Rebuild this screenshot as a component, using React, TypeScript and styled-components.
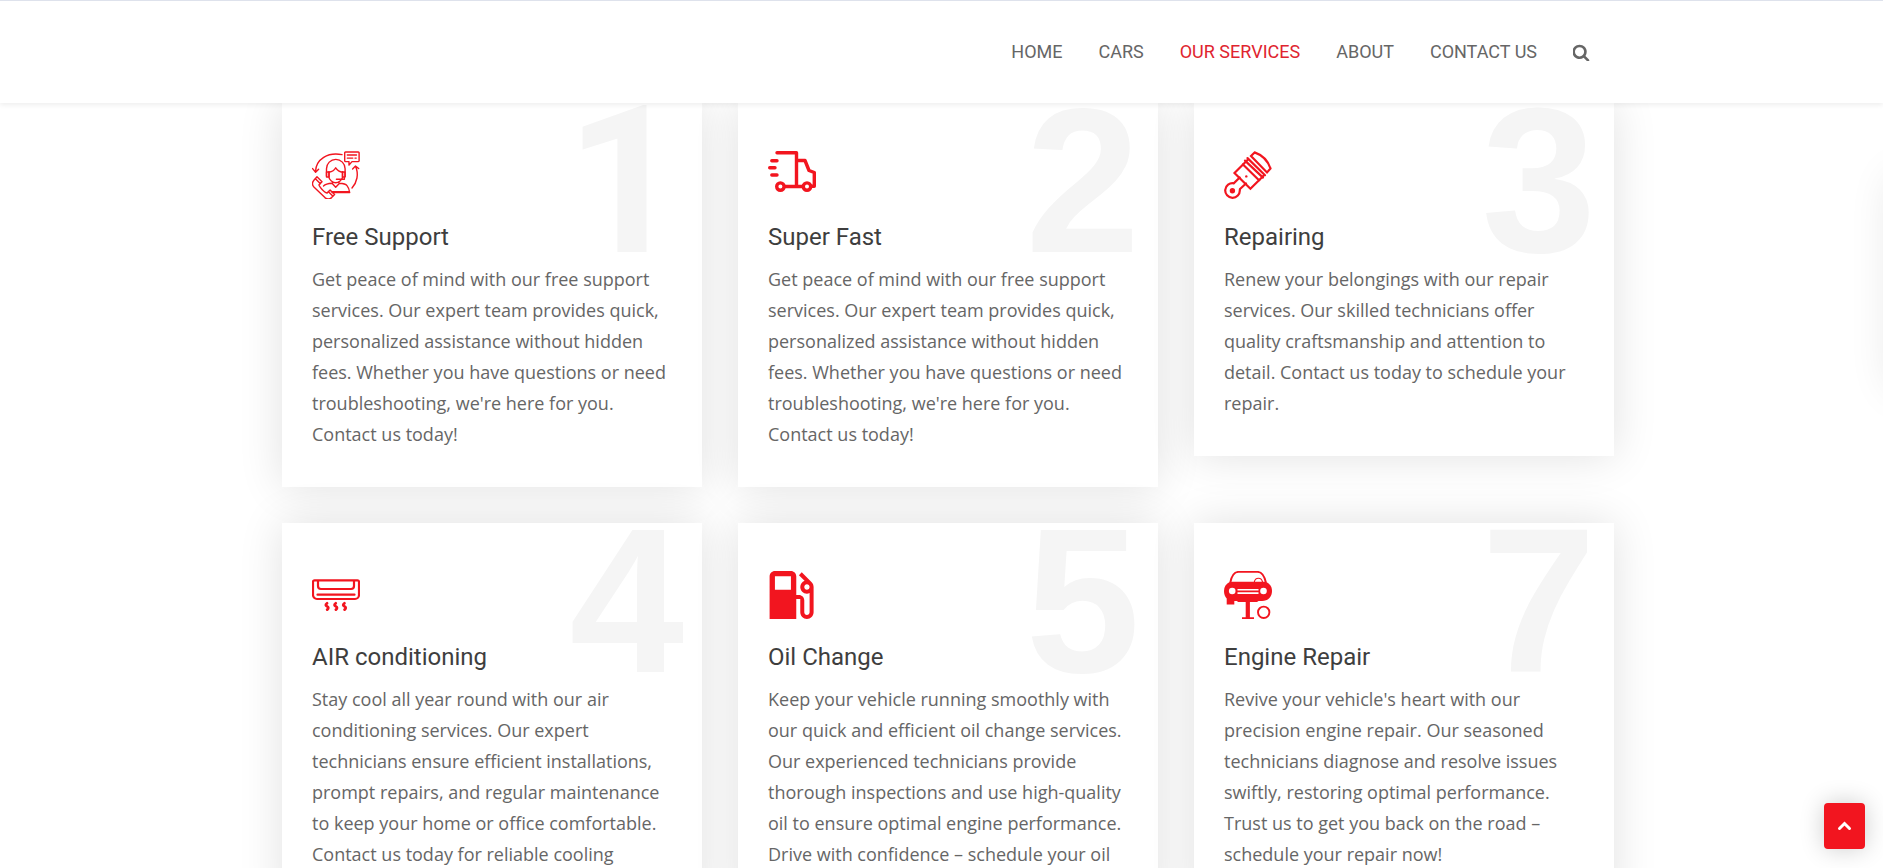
import React from "react";
import styled, { createGlobalStyle } from "styled-components";

const RED = "#f2151f";

const GlobalStyle = createGlobalStyle`
  *, *::before, *::after { box-sizing: border-box; }
  body {
    margin: 0;
    background: #fff;
    color: #666;
    font-family: "Open Sans", sans-serif;
    font-size: 18px;
    line-height: 31px;
  }
`;

const Page = styled.div`
  position: relative;
  height: 100vh;
  overflow: hidden;
`;

const Header = styled.header`
  position: relative;
  z-index: 10;
  height: 103px;
  background: #fff;
  border-top: 1px solid #dee2ec;
  box-shadow: 0 2px 5px rgba(0, 0, 0, 0.07);
`;

const Container = styled.div`
  width: 100%;
  max-width: 1369px;
  margin: 0 auto;
  padding: 0 12px 0 25px;
`;

const NavBar = styled(Container)`
  height: 100%;
  display: flex;
  align-items: center;
  justify-content: flex-end;
`;

const Nav = styled.nav`
  display: flex;
  align-items: center;
  gap: 36px;
  margin-right: 24px;
`;

const NavLink = styled.a<{ $active?: boolean }>`
  font-family: Roboto, sans-serif;
  font-size: 18px;
  line-height: 24px;
  text-decoration: none;
  text-transform: uppercase;
  color: ${(p) => (p.$active ? "#e0242f" : "#666")};
`;

const SearchButton = styled.button`
  display: flex;
  padding: 0;
  border: 0;
  background: none;
  color: #666;
  cursor: pointer;
`;

const Grid = styled.section`
  display: grid;
  grid-template-columns: repeat(3, 1fr);
  gap: 36px;
  align-items: start;
`;

const Card = styled.article`
  position: relative;
  padding: 48px 30px 37px;
  background: #fff;
  box-shadow: 0 0 42px rgba(0, 0, 0, 0.12);
`;

const CardNumber = styled.span<{ $plain?: boolean }>`
  position: absolute;
  top: 0;
  right: 18px;
  font-family: ${(p) => (p.$plain ? "Roboto" : '"Liberation Sans"')}, sans-serif;
  font-size: 206px;
  font-weight: 700;
  line-height: ${(p) => (p.$plain ? 158 : 156)}px;
  color: #f5f5f5;
`;

const CardIcon = styled.svg`
  position: relative;
  display: block;
  width: 48px;
  height: 48px;
  color: ${RED};
`;

const CardTitle = styled.h2`
  position: relative;
  margin: 23px 0 11px;
  font-family: Roboto, sans-serif;
  font-size: 24px;
  font-weight: 400;
  line-height: 31px;
  color: #3e3e3e;
`;

const CardText = styled.p`
  position: relative;
  margin: 0;
`;

const SidePanel = styled.aside`
  position: absolute;
  top: 178px;
  left: calc(100% + 11px);
  width: 240px;
  height: 210px;
  background: #fff;
  box-shadow: 0 0 42px rgba(0, 0, 0, 0.12);
`;

const BackToTop = styled.button`
  position: fixed;
  right: 18px;
  bottom: 19px;
  z-index: 20;
  display: flex;
  align-items: center;
  justify-content: center;
  width: 41px;
  height: 46px;
  padding: 0;
  border: 0;
  border-radius: 4px;
  background: ${RED};
  color: #fff;
  box-shadow: 0 0 24px rgba(0, 0, 0, 0.2);
  cursor: pointer;
`;

const stroke = (width: number) => ({
  fill: "none",
  stroke: "currentColor",
  strokeWidth: width,
  strokeLinecap: "round" as const,
  strokeLinejoin: "round" as const,
});

const SupportIcon = () => (
  <CardIcon viewBox="0 0 48 48" aria-hidden="true">
    <g {...stroke(1.4)}>
      <path d="M30 3.6C16 .8 4 8 3.5 20.5M.6 17.6l3 3.6 3-3" />
      <path d="M40 37c5-5.500 7-14 3.600-21.500M40.600 18l2.900-2.900 3.200 2.400" />
      <path d="M33.500 1H46.300a.8.8 0 0 1 .8.8v8a.8.8 0 0 1-.8.8H40l-3 3.500v-3.500h-3.500a.8.8 0 0 1-.8-.8v-8a.8.8 0 0 1 .8-.8zM35.300 4h9.200M35.300 7.100h5.500M43 7.100h1.200" />
      <path d="M14.500 25V17.700a9.300 9.300 0 0 1 18.600 0V25.500" />
      <path d="M17 21.200c3-.4 5.500-2 6.700-4.400 1.500 2.400 4 4 7 4.400" />
      <path d="M17 20.800v5.500c0 2.700 4 5.500 6.700 5.500s6.800-2.800 6.800-5.500v-5.500" />
      <path d="M14.500 21H17v5h-2.500zM30.500 21H33v5h-2.500zM32.400 26v2.300h-8" />
      <path d="M11.500 35c2-2 5-2.500 8.500-2.700l3.700 4 3.800-4c3 .2 6 .5 7.500 2.300 1.700 2 2.400 4.400 2.700 7H20.500M19.500 40.800H37M21 31.500l-1 1M26.700 31.500l1 1" />
      <path d="M5 25.800l5 5-3 3c0 1.700 5.500 8 8.200 8.200l2.900-2.900 4.500 4.500-3 3c-2 1.700-4.600 1.700-6.700 0L1.900 36c-1.700-1.900-1.700-4.700 0-6.700zM3.200 27.500l5.200 5.200M16.200 40.500l4.800 4.800" />
    </g>
  </CardIcon>
);

const TruckIcon = () => (
  <CardIcon viewBox="0 0 48 48" aria-hidden="true">
    <g {...stroke(3.4)}>
      <path d="M9 1.800H28.500V35.500M28.500 9.500H37l4 10 5.300 2V35.200H43.500M17 35.500H34.500" />
      <circle cx="12.400" cy="35.600" r="3.700" />
      <circle cx="39" cy="35.600" r="3.700" />
      <path d="M3.800 9.700h5.200M1.700 16.800h5.300M3.800 24h5.200" />
    </g>
  </CardIcon>
);

const PistonIcon = () => (
  <CardIcon viewBox="0 0 48 48" aria-hidden="true">
    <g {...stroke(2.2)} strokeLinejoin="miter">
      <path d="M15.700 26.500l-5.900 5.800A7.300 7.300 0 1 0 15.800 39l.2-1 6-5.500" />
      <path d="M10.500 22l8.500-8.500L35 29.300l-8.600 8.400z" />
      <path d="M21 9.600l18 17M23.500 7.100L41 24.200M19 13.500l5-5M35 29.300l4.500-4.500" />
      <path d="M27 5l3.600-3.600C38 4 44 10 46.500 17.500L43 21.400z" />
    </g>
    <circle cx="8.400" cy="39.700" r="2.700" fill="currentColor" />
    <circle cx="22.300" cy="25.400" r="1.200" fill="currentColor" />
  </CardIcon>
);

const AirConditionerIcon = () => (
  <CardIcon viewBox="0 0 48 48" aria-hidden="true">
    <g {...stroke(2.2)}>
      <path d="M2.500 9.300H45.500a1.500 1.500 0 0 1 1.500 1.500V24a4 4 0 0 1-4 4H5a4 4 0 0 1-4-4V10.800a1.500 1.500 0 0 1 1.500-1.500z" />
      <path d="M6 10v5a3 3 0 0 0 3 3H39a3 3 0 0 0 3-3v-5M5.500 23.700h37" />
    </g>
    <g {...stroke(2.8)}>
      <path d="M15 32.300c-1.800 1.200-1.300 2.300.1 3.100s1.700 1.900.1 3.200" />
      <path d="M23.700 32.300c-1.800 1.200-1.300 2.300.1 3.100s1.700 1.900.1 3.200" />
      <path d="M32.400 32.300c-1.800 1.200-1.300 2.300.1 3.100s1.700 1.900.1 3.200" />
    </g>
  </CardIcon>
);

const FuelIcon = () => (
  <CardIcon viewBox="3.4 3 18 18" aria-hidden="true">
    <path
      fill="currentColor"
      d="M19.770 7.230l.01-.01-3.720-3.720L15 4.560l2.110 2.110c-.94.36-1.610 1.260-1.610 2.330 0 1.380 1.120 2.500 2.500 2.500.36 0 .69-.08 1-.21v7.210c0 .55-.45 1-1 1s-1-.45-1-1V14c0-1.100-.9-2-2-2h-1V5c0-1.100-.9-2-2-2H6c-1.100 0-2 .9-2 2v16h10v-7.500h1.500v5c0 1.380 1.120 2.500 2.500 2.500s2.500-1.120 2.500-2.500V9c0-.69-.28-1.320-.73-1.770zM12 10H6V5h6v5zm6 0c-.55 0-1-.45-1-1s.45-1 1-1 1 .45 1 1-.45 1-1 1z"
    />
  </CardIcon>
);

const CarLiftIcon = () => (
  <CardIcon viewBox="0 0 48 48" aria-hidden="true">
    <g fill="none" stroke="currentColor" strokeWidth="1.900">
      <path d="M6.300 11.500C7.500 5.500 10 .9 14.500 .9H33.500C38 .9 40.500 5.500 41.900 11.500" />
      <path d="M30.300 11a4.200 4.800 0 0 1 8.200 0" strokeWidth="1.200" />
      <circle cx="39.700" cy="41.300" r="5.700" />
    </g>
    <g fill="currentColor">
      <path d="M6 10.700H42c4 2 6 5 6 9.300 0 6-4 10-10 10H34.500L33 31H14l-1-1H10.300v3.500H2.700V27.500C1 25.500 0 23 0 20c0-4.300 2-7.300 6-9.300z" />
      <path d="M21.700 30h4.200V46.300H30V48H18V46.300h3.700z" />
    </g>
    <g fill="#fff">
      <circle cx="8.200" cy="20" r="3.300" />
      <circle cx="39.500" cy="20" r="3.300" />
      <path d="M13.500 18h21v1.600h-21zM13.500 21.300h21v1.600h-21z" />
    </g>
  </CardIcon>
);

const links = ["Home", "Cars", "Our Services", "About", "Contact Us"];

const services = [
  {
    number: 1,
    title: "Free Support",
    Icon: SupportIcon,
    text: "Get peace of mind with our free support services. Our expert team provides quick, personalized assistance without hidden fees. Whether you have questions or need troubleshooting, we're here for you. Contact us today!",
  },
  {
    number: 2,
    title: "Super Fast",
    Icon: TruckIcon,
    text: "Get peace of mind with our free support services. Our expert team provides quick, personalized assistance without hidden fees. Whether you have questions or need troubleshooting, we're here for you. Contact us today!",
  },
  {
    number: 3,
    title: "Repairing",
    Icon: PistonIcon,
    text: "Renew your belongings with our repair services. Our skilled technicians offer quality craftsmanship and attention to detail. Contact us today to schedule your repair.",
  },
  {
    number: 4,
    title: "AIR conditioning",
    Icon: AirConditionerIcon,
    text: "Stay cool all year round with our air conditioning services. Our expert technicians ensure efficient installations, prompt repairs, and regular maintenance to keep your home or office comfortable. Contact us today for reliable cooling",
  },
  {
    number: 5,
    title: "Oil Change",
    Icon: FuelIcon,
    text: "Keep your vehicle running smoothly with our quick and efficient oil change services. Our experienced technicians provide thorough inspections and use high-quality oil to ensure optimal engine performance. Drive with confidence – schedule your oil",
  },
  {
    number: 7,
    title: "Engine Repair",
    Icon: CarLiftIcon,
    text: "Revive your vehicle's heart with our precision engine repair. Our seasoned technicians diagnose and resolve issues swiftly, restoring optimal performance. Trust us to get you back on the road – schedule your repair now!",
  },
];

export default function App() {
  return (
    <Page>
      <GlobalStyle />
      <Header>
        <NavBar>
          <Nav>
            {links.map((label) => (
              <NavLink key={label} href="#" $active={label === "Our Services"}>
                {label}
              </NavLink>
            ))}
            <SearchButton aria-label="Search">
              <svg width="17" height="17" viewBox="64 64 1664 1664" aria-hidden="true">
                <path
                  fill="currentColor"
                  d="M1152 832q0-185-131.500-316.500t-316.500-131.500-316.500 131.500-131.500 316.500 131.500 316.500 316.500 131.500 316.500-131.500 131.500-316.500zm512 832q0 52-38 90t-90 38q-54 0-90-38l-343-342q-179 124-399 124-143 0-273.500-55.500t-225-150-150-225-55.500-273.500 55.500-273.500 150-225 225-150 273.500-55.500 273.500 55.500 225 150 150 225 55.500 273.500q0 220-124 399l343 343q37 37 37 90z"
                />
              </svg>
            </SearchButton>
          </Nav>
        </NavBar>
      </Header>
      <Container as="main">
        <Grid>
          {services.map(({ number, title, Icon, text }) => (
            <Card key={number}>
              <CardNumber $plain={number === 1} aria-hidden="true">
                {number}
              </CardNumber>
              <Icon />
              <CardTitle>{title}</CardTitle>
              <CardText>{text}</CardText>
            </Card>
          ))}
        </Grid>
      </Container>
      <SidePanel aria-hidden="true" />
      <BackToTop aria-label="Back to top">
        <svg width="15" height="10" viewBox="0 0 15 10" aria-hidden="true">
          <path d="M2.500 7.500l5-5 5 5" fill="none" stroke="#fff" strokeWidth="3" strokeLinecap="round" />
        </svg>
      </BackToTop>
    </Page>
  );
}
